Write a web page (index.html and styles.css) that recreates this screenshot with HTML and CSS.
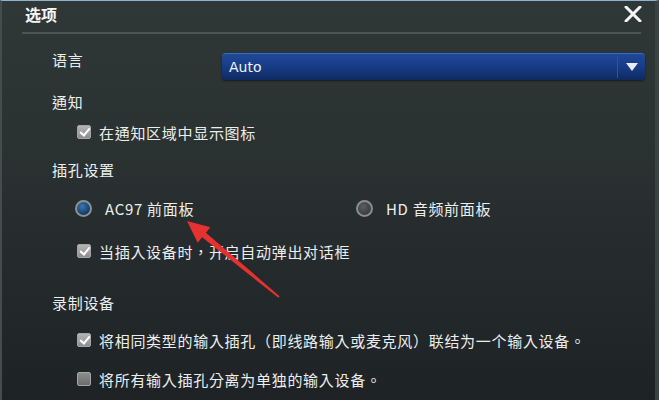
FILE: index.html
```html
<!DOCTYPE html>
<html lang="zh-TW">
<head>
    <meta charset="UTF-8">
    <title>选项</title>
    <link rel="stylesheet" href="styles.css">
</head>
<body>
    <div class="window">
        <!-- 標題列 -->
        <div class="title-bar">
            <span class="title">选项</span>
            <svg class="close" width="18" height="16" viewBox="0 0 18 16">
                <path d="M2 1 L16 15 M16 1 L2 15" stroke="#f4f4f4" stroke-width="3" stroke-linecap="round"/>
            </svg>
        </div>

        <div class="content">
            <div class="lang-row">
                <span class="label lang-label">语言</span>
                <div class="select">
                    <span class="select-text">Auto</span>
                    <span class="select-btn">
                        <svg width="12" height="8" viewBox="0 0 12 8"><path d="M0 0 H12 L6 8 Z" fill="#e8ecf4"/></svg>
                    </span>
                </div>
            </div>

            <div class="label gap-notify">通知</div>
            <div class="option gap-cb1">
                <span class="checkbox checked"></span>
                <span>在通知区域中显示图标</span>
            </div>

            <div class="label gap-jack">插孔设置</div>
            <div class="radio-row gap-radio">
                <div class="radio-option">
                    <span class="radio selected"></span>
                    <span>AC97 前面板</span>
                </div>
                <div class="radio-option">
                    <span class="radio"></span>
                    <span>HD 音频前面板</span>
                </div>
            </div>
            <div class="option gap-cb2">
                <span class="checkbox checked"></span>
                <span>当插入设备时，开启自动弹出对话框</span>
            </div>

            <div class="label gap-rec">录制设备</div>
            <div class="option gap-cb3">
                <span class="checkbox checked"></span>
                <span>将相同类型的输入插孔（即线路输入或麦克风）联结为一个输入设备。</span>
            </div>
            <div class="option gap-cb4">
                <span class="checkbox"></span>
                <span>将所有输入插孔分离为单独的输入设备。</span>
            </div>
        </div>

        <!-- 標註箭頭 -->
        <svg class="annotation" width="659" height="400" viewBox="0 0 659 400">
            <polygon points="187,221 210.4,227.3 205.9,232.7 279.6,296.2 278.4,297.8 202.1,237.3 197.7,242.7" fill="#e5312f"/>
        </svg>
    </div>
</body>
</html>
```

FILE: styles.css
```css
/* 主版面 */
body {
    margin: 0;
    background: #1f2326;
    font-family: "Noto Sans CJK TC", "Noto Sans CJK SC", sans-serif;
    color: #e6e8e8;
}

.window {
    position: relative;
    width: 659px;
    height: 400px;
    box-sizing: border-box;
    border-top: 1px solid #8fb2cf;
    border-left: 2px solid #454c4d;
    border-right: 4px solid #3a4243;
    background: linear-gradient(to bottom, #2f3737 0%, #2a3131 40%, #1e2225 100%);
    overflow: hidden;
}

/* 標題列 */
.title-bar {
    height: 31px;
    margin: 0 14px 0 20px;
    border-bottom: 2px solid #4b5556;
    display: flex;
    justify-content: space-between;
    align-items: center;
}

.title {
    font-size: 16px;
    font-weight: bold;
    color: #f6f6f6;
    margin-left: 3px;
    margin-top: -6px;
}

.close {
    margin-top: -6px;
    margin-right: -1px;
}

/* 內容 */
.content {
    padding-left: 50px;
    font-size: 15px;
    letter-spacing: 0.7px;
    color: #eceeee;
}

.label {
    height: 20px;
    line-height: 20px;
}

.lang-row {
    margin-top: 16px;
    display: flex;
    align-items: flex-start;
}

.lang-label {
    width: 170px;
}

.select {
    margin-top: 3px;
    width: 423px;
    height: 27px;
    box-sizing: border-box;
    border-radius: 4px;
    border-top: 1px solid #3d6bc0;
    background: linear-gradient(to bottom, #21489a 0%, #173c85 50%, #0e2a62 100%);
    display: flex;
    align-items: center;
    justify-content: space-between;
    box-shadow: 0 1px 2px rgba(0, 0, 0, 0.5);
}

.select-text {
    margin-left: 7px;
    font-family: "DejaVu Sans", sans-serif;
    font-size: 14px;
    letter-spacing: 0;
    color: #f0f2f8;
}

.select-btn {
    height: 21px;
    width: 27px;
    border-left: 1px solid #2f5696;
    display: flex;
    align-items: center;
    justify-content: center;
}

.option {
    margin-left: 25px;
    height: 20px;
    display: flex;
    align-items: center;
    gap: 8px;
}

/* 勾選框 */
.checkbox {
    width: 14px;
    height: 14px;
    box-sizing: border-box;
    border: 1px solid #a5a5a5;
    border-radius: 2px;
    background: linear-gradient(to bottom, #8d8d8d, #6c6c6c);
    flex-shrink: 0;
    position: relative;
}

.checkbox.checked {
    background: linear-gradient(to bottom, #b4b4b4, #8e8e8e);
}

.checkbox.checked::after {
    content: "";
    position: absolute;
    left: 4px;
    top: 0px;
    width: 4px;
    height: 8px;
    border-right: 2px solid #ffffff;
    border-bottom: 2px solid #ffffff;
    transform: rotate(40deg);
}

/* 單選 */
.radio-row {
    margin-left: 23px;
    height: 20px;
    display: flex;
    align-items: center;
}

.radio-option {
    width: 281px;
    display: flex;
    align-items: center;
    gap: 13px;
}

.radio {
    width: 17px;
    height: 17px;
    box-sizing: border-box;
    border-radius: 50%;
    border: 2px solid #8b8e90;
    background: radial-gradient(circle at 40% 35%, #5a5e60, #2c3032);
    flex-shrink: 0;
}

.radio.selected {
    border-color: #8c9194;
    background: radial-gradient(circle at 40% 35%, #3c78b0, #123a66 70%);
}

/* 各列間距 */
.gap-notify { margin-top: 12px; }
.gap-cb1 { margin-top: 10px; }
.gap-jack { margin-top: 18px; }
.gap-radio { margin-top: 18px; }
.gap-cb2 { margin-top: 23px; }
.gap-rec { margin-top: 32px; }
.gap-cb3 { margin-top: 17px; }
.gap-cb4 { margin-top: 19px; }

.annotation {
    position: absolute;
    left: -2px;
    top: -1px;
    pointer-events: none;
}
```
